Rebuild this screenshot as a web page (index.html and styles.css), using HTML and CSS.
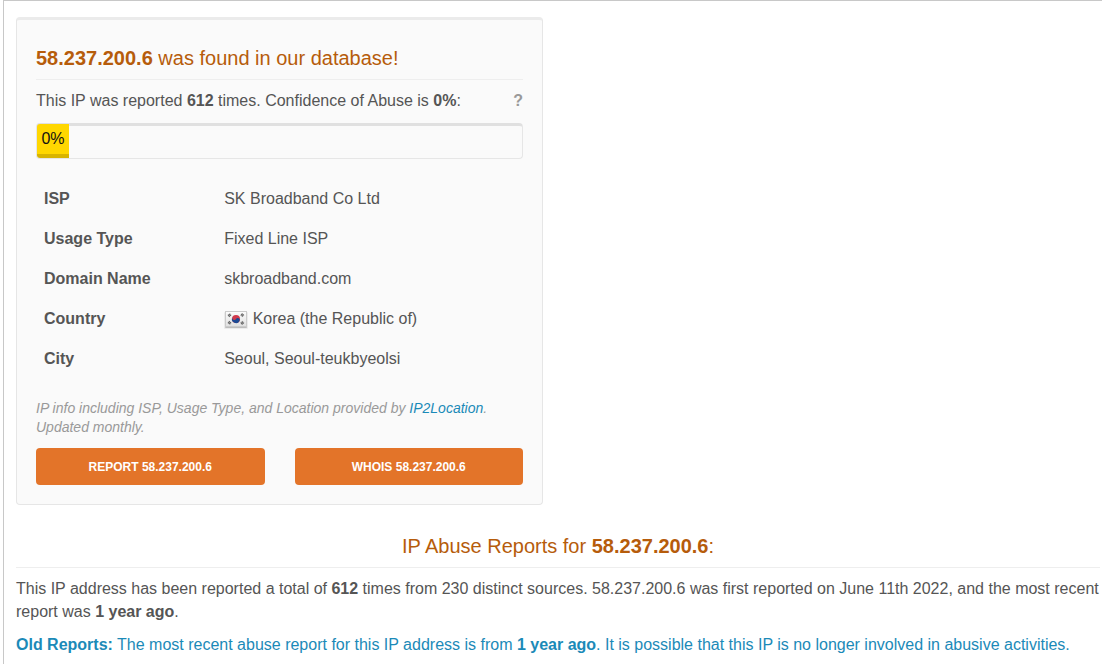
FILE: index.html
```html
<!DOCTYPE html>
<html lang="en">
<head>
<meta charset="utf-8">
<title>58.237.200.6 | IP abuse reports</title>
<link rel="stylesheet" href="styles.css">
</head>
<body>
<main class="page">
  <div class="columns">
    <section class="card">
      <h2 class="title"><b>58.237.200.6</b> was found in our database!</h2>
      <div class="summary">
        <p>This IP was reported <b>612</b> times. Confidence of Abuse is <b>0%</b>:</p>
        <button class="help" type="button" aria-label="About the confidence score">?</button>
      </div>
      <div class="meter"><div class="meter-fill">0%</div></div>
      <table class="facts">
        <tr><th scope="row">ISP</th><td>SK Broadband Co Ltd</td></tr>
        <tr><th scope="row">Usage Type</th><td>Fixed Line ISP</td></tr>
        <tr><th scope="row">Domain Name</th><td>skbroadband.com</td></tr>
        <tr><th scope="row">Country</th><td><svg class="flag" viewBox="0 0 24 20" aria-hidden="true">
          <defs>
            <linearGradient id="cloth" x1="0" y1="0" x2="0" y2="1"><stop offset="0" stop-color="#fcfcfc"/><stop offset="1" stop-color="#e0e0e0"/></linearGradient>
          </defs>
          <rect x="1" y="3" width="22" height="16" rx="1" fill="#c9c9c9"/>
          <rect x="0" y="3" width="24" height="17" rx="1" fill="#000" opacity=".06"/>
          <rect x="1.5" y="2.5" width="21" height="15" fill="url(#cloth)" stroke="#cbcbcb"/>
          <circle cx="12" cy="10" r="4" fill="#d03a4c"/>
          <path d="M8.5 8A2 2 0 0 0 12 10a2 2 0 0 1 3.5 2A4 4 0 0 1 8.5 8Z" fill="#1c4a94"/>
          <g stroke="#666" stroke-width="2.8" stroke-dasharray="1.2 .3">
            <path d="M4.4 7.2 6.8 5.2"/><path d="M17.2 5.2 19.6 7.2"/><path d="M4.4 12.8 6.8 14.8"/><path d="M17.2 14.8 19.6 12.8"/>
          </g>
        </svg> Korea (the Republic of)</td></tr>
        <tr><th scope="row">City</th><td>Seoul, Seoul-teukbyeolsi</td></tr>
      </table>
      <p class="note">IP info including ISP, Usage Type, and Location provided by <a href="#">IP2Location</a>. Updated monthly.</p>
      <div class="actions">
        <a class="action" href="#">REPORT 58.237.200.6</a>
        <a class="action" href="#">WHOIS 58.237.200.6</a>
      </div>
    </section>
  </div>
  <section class="reports">
    <h3 class="title centered">IP Abuse Reports for <b>58.237.200.6</b>:</h3>
    <p class="text">This IP address has been reported a total of <b>612</b> times from 230 distinct sources. 58.237.200.6 was first reported on June 11th 2022, and the most recent report was <b>1 year ago</b>.</p>
    <p class="text notice"><b>Old Reports:</b> The most recent abuse report for this IP address is from <b>1 year ago</b>. It is possible that this IP is no longer involved in abusive activities.</p>
  </section>
</main>
</body>
</html>
```
FILE: styles.css
```css
* { box-sizing: border-box; }

body {
  margin: 0;
  background: #fff;
  color: #555;
  font: 16px/23px "Liberation Sans", Arial, sans-serif;
}

p, h2, h3 { margin: 0; }

a { color: #1b8ab8; text-decoration: none; }

.page {
  min-height: 100vh;
  margin-left: 3px;
  padding: 16px 2px 8px 12px;
  border-top: 1px solid #c8c8c8;
  border-left: 1px solid #c8c8c8;
}

.columns {
  display: grid;
  grid-template-columns: 1fr 1fr;
  gap: 30px;
}

.card {
  padding: 24px 19px 19px;
  border: 1px solid #e6e6e6;
  border-top: 3px solid #ebebeb;
  border-radius: 4px;
  background: #fafafa;
}

.title {
  padding-bottom: 7px;
  border-bottom: 1px solid #eee;
  color: #b65c0b;
  font-size: 20px;
  font-weight: 400;
  line-height: 28px;
}

.centered { text-align: center; }

.summary {
  display: flex;
  justify-content: space-between;
  margin-top: 9px;
}

.help {
  padding: 0;
  border: 0;
  background: none;
  color: #999;
  font: inherit;
  font-weight: 700;
}

.meter {
  height: 36px;
  margin-top: 11px;
  border: 1px solid #e6e6e6;
  border-top: 3px solid #e0e0e0;
  border-radius: 4px;
}

.meter-fill {
  width: 32px;
  height: 34px;
  margin-top: -2px;
  padding-top: 3px;
  border-bottom: 4px solid #d8b400;
  border-radius: 3px 0 0 3px;
  background: #ffd700;
  color: #111;
  text-align: center;
}

.facts {
  width: 100%;
  margin-top: 19px;
  border-collapse: collapse;
}

.facts th, .facts td {
  height: 40px;
  padding: 0 8px;
  text-align: left;
}

.facts th { width: 37%; }

.flag {
  width: 24px;
  height: 20px;
  vertical-align: -5px;
}

.note {
  margin-top: 21px;
  color: #999;
  font-size: 14px;
  font-style: italic;
  line-height: 19px;
}

.actions {
  display: grid;
  grid-template-columns: 1fr 1fr;
  gap: 30px;
  margin-top: 11px;
}

.action {
  padding: 10px 8px 8px;
  border-radius: 4px;
  background: #e37429;
  color: #fff;
  font-size: 12px;
  font-weight: 700;
  line-height: 19px;
  text-align: center;
}

.reports { padding-top: 27px; }

.text { margin-top: 10px; }

.title + .text { margin-top: 9px; }

.notice { color: #1b8ab8; }
```
